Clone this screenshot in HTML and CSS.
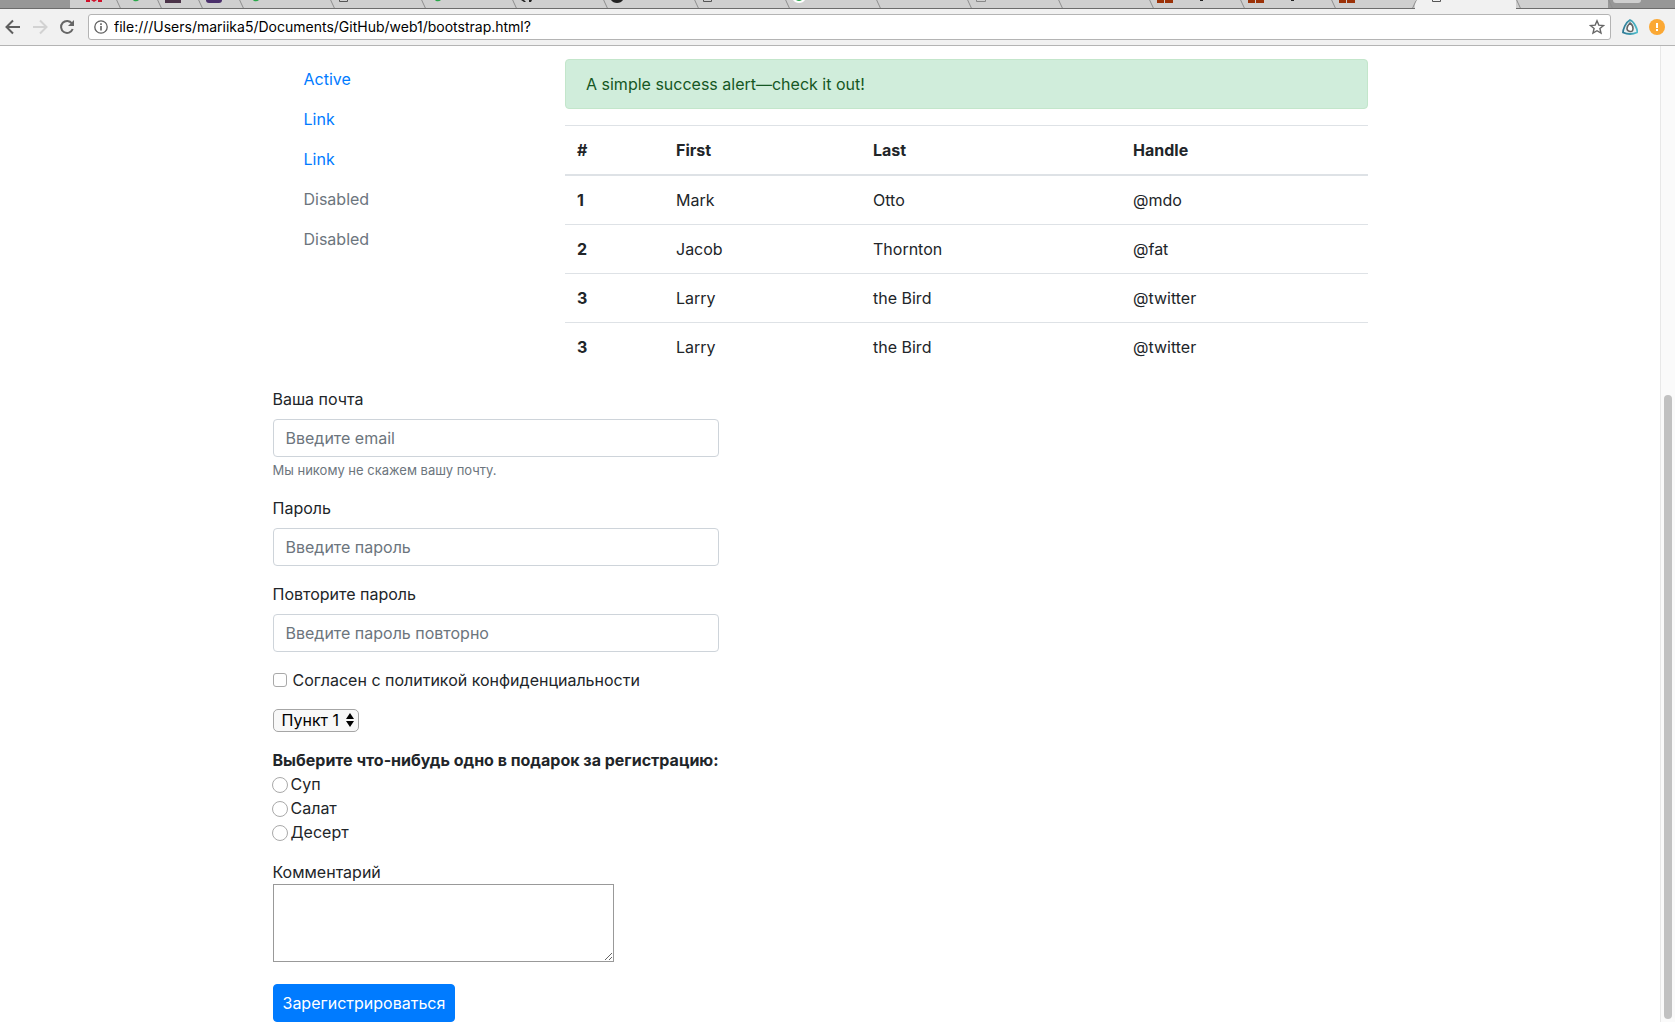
FILE: index.html
```html
<!DOCTYPE html>
<html lang="ru">
<head>
<meta charset="utf-8">
<meta name="viewport" content="width=device-width, initial-scale=1">
<title>Bootstrap</title>
<link rel="stylesheet" href="styles.css">
</head>
<body>
<header class="browser">
  <div class="tabs">
    <div class="tab tab-first"><svg width="16" height="3"><path d="M0 0h4v2H0zM12 0h4v2h-4zM5 0h6L8 2z" fill="#d0112b"/></svg></div>
    <div class="tab tab-pinned"><svg width="16" height="3"><path d="M9 0h6q-2 2-5 1z" fill="#2aa84a"/></svg></div>
    <div class="tab tab-pinned"><svg width="16" height="3"><path d="M0 0h16v3H0z" fill="#4b3348"/></svg></div>
    <div class="tab tab-pinned"><svg width="16" height="3"><path d="M0 0h16q0 3-3 3H3Q0 3 0 0z" fill="#4a2f6b"/></svg></div>
    <div class="tab"><svg width="16" height="3"><path d="M6 0h6q-2 2-5 1z" fill="#2aa84a"/></svg></div>
    <div class="tab"><svg width="16" height="3"><path d="M1.500 0v1.500h8V0" fill="none" stroke="#555"/></svg></div>
    <div class="tab"><svg width="16" height="3"><path d="M6 0h6q-2 2-5 1z" fill="#2aa84a"/></svg></div>
    <div class="tab"><svg width="16" height="3"><path d="M1 0h3l2 2H4zM9 0h3l-1 2H9z" fill="#222"/></svg></div>
    <div class="tab"><svg width="16" height="3"><path d="M0 0h12q-2 3-6 3T0 0z" fill="#222"/></svg></div>
    <div class="tab"><svg width="16" height="3"><path d="M1.500 0v1.500h8V0" fill="none" stroke="#555"/></svg></div>
    <div class="tab"><svg width="16" height="3"><path d="M0 0h12q-2 3-6 3T0 0z" fill="#fff"/><path d="M3 0h6Q6 2 3 0z" fill="#2aa84a"/></svg></div>
    <div class="tab"></div>
    <div class="tab"><svg width="16" height="3"><path d="M1.500 0v1.500h9V0" fill="none" stroke="#888"/></svg></div>
    <div class="tab"></div>
    <div class="tab"><svg width="60" height="3"><path d="M0 0h7v3H0zM8 0h8v3H8z" fill="#9c3208"/><path d="M43 0h3v1h-3z" fill="#222"/></svg></div>
    <div class="tab"><svg width="60" height="3"><path d="M0 0h7v3H0zM8 0h8v3H8z" fill="#9c3208"/><path d="M43 0h3v1h-3z" fill="#222"/></svg></div>
    <div class="tab tab-narrow"><svg width="16" height="3"><path d="M0 0h7v3H0zM8 0h8v3H8z" fill="#9c3208"/></svg></div>
    <div class="tab tab-active"><svg width="16" height="3"><path d="M1.500 0v1.500h8V0" fill="none" stroke="#555"/></svg></div>
    <div class="tab tab-last"></div>
    <div class="tabs-rest"><div class="new-tab"></div></div>
  </div>
  <div class="toolbar">
    <button class="tool" type="button" aria-label="Назад"><svg width="16" height="16" fill="none" stroke="#5f5f5f" stroke-width="2"><path d="M15 8H2M8 1.500 1.500 8 8 14.500"/></svg></button>
    <button class="tool" type="button" aria-label="Вперёд"><svg width="16" height="16" fill="none" stroke="#d2d2d2" stroke-width="2"><path d="M1 8h13M8 1.500 14.500 8 8 14.500"/></svg></button>
    <button class="tool" type="button" aria-label="Обновить"><svg width="16" height="16"><path d="M13 4.500A6 6 0 1 0 13.700 10" fill="none" stroke="#666" stroke-width="2"/><path d="M15 1v6H9z" fill="#666"/></svg></button>
    <div class="address">
      <svg width="14" height="14" fill="none" stroke="#5f5f5f"><circle cx="7" cy="7" r="6.200" stroke-width="1.300"/><path d="M7 6v4.500M7 3.300v1.700" stroke-width="1.600"/></svg>
      <input class="url" type="text" aria-label="Адрес" value="file:///Users/mariika5/Documents/GitHub/web1/bootstrap.html?">
      <svg width="16" height="16"><path d="m8 1.800 1.800 4.300 4.700.4-3.600 3 1.100 4.600L8 11.700l-4 2.400 1.100-4.600-3.600-3 4.700-.4z" fill="none" stroke="#666" stroke-width="1.400"/></svg>
    </div>
    <svg width="16" height="16"><defs><linearGradient id="shell" x1="0" x2="1"><stop offset="0" stop-color="#2e7893"/><stop offset="1" stop-color="#4dbccb"/></linearGradient></defs><path d="M8 1Q11 2 13.500 7T15 13.500Q8 16.500 1 13.500 1 11 2.800 7T8 1z" fill="#e8f1f3" stroke="url(#shell)" stroke-width="1.800"/><path d="M8 4Q11 6 11 9.500T8 12.500 5 9.500 8 4z" fill="#fff" stroke="#666" stroke-width="1.600"/></svg>
    <svg width="16" height="16"><circle cx="8" cy="8" r="8" fill="#fba834"/><path d="M7 4h2v5H7zM7 10h2v2H7z" fill="#fff"/></svg>
  </div>
</header>
<div class="viewport">
  <main class="page">
    <div class="container">
      <div class="row">
        <nav class="side">
          <a class="side-link" href="#">Active</a>
          <a class="side-link" href="#">Link</a>
          <a class="side-link" href="#">Link</a>
          <a class="side-link disabled" href="#">Disabled</a>
          <a class="side-link disabled" href="#">Disabled</a>
        </nav>
        <section class="content">
          <div class="alert" role="alert">A simple success alert—check it out!</div>
          <table class="table">
            <colgroup><col class="col-num"><col class="col-first"><col class="col-last"><col></colgroup>
            <thead>
              <tr><th scope="col">#</th><th scope="col">First</th><th scope="col">Last</th><th scope="col">Handle</th></tr>
            </thead>
            <tbody>
              <tr><th scope="row">1</th><td>Mark</td><td>Otto</td><td>@mdo</td></tr>
              <tr><th scope="row">2</th><td>Jacob</td><td>Thornton</td><td>@fat</td></tr>
              <tr><th scope="row">3</th><td>Larry</td><td>the Bird</td><td>@twitter</td></tr>
              <tr><th scope="row">3</th><td>Larry</td><td>the Bird</td><td>@twitter</td></tr>
            </tbody>
          </table>
        </section>
      </div>
      <form class="form">
        <div class="group">
          <label class="label" for="email">Ваша почта</label>
          <input class="control" id="email" type="email" placeholder="Введите email">
          <small class="hint">Мы никому не скажем вашу почту.</small>
        </div>
        <div class="group">
          <label class="label" for="pass">Пароль</label>
          <input class="control" id="pass" type="password" placeholder="Введите пароль">
        </div>
        <div class="group">
          <label class="label" for="pass2">Повторите пароль</label>
          <input class="control" id="pass2" type="password" placeholder="Введите пароль повторно">
        </div>
        <div class="group">
          <label class="check"><input class="box" type="checkbox">Согласен с политикой конфиденциальности</label>
        </div>
        <div class="group select-wrap">
          <select class="select" aria-label="Пункт"><option>Пункт 1</option><option>Пункт 2</option></select>
          <svg class="arrows" width="8" height="14"><path d="M4 0l4 6H0zM4 14l4-6H0z"/></svg>
        </div>
        <fieldset class="group gifts">
          <legend class="legend">Выберите что-нибудь одно в подарок за регистрацию:</legend>
          <label class="option"><input class="dot" type="radio" name="gift">Суп</label>
          <label class="option"><input class="dot" type="radio" name="gift">Салат</label>
          <label class="option"><input class="dot" type="radio" name="gift">Десерт</label>
        </fieldset>
        <div class="comment">
          <label for="comment">Комментарий</label>
          <textarea class="area" id="comment"></textarea>
        </div>
        <button class="submit" type="submit">Зарегистрироваться</button>
      </form>
    </div>
  </main>
  <div class="scrollbar"><div class="thumb"></div></div>
</div>
</body>
</html>
```
FILE: styles.css
```css
* { box-sizing: border-box; }

body {
  margin: 0;
  min-height: 100vh;
  display: flex;
  flex-direction: column;
  background: #fff;
  color: #212529;
  font: 400 16px/24px Inter, "Liberation Sans", sans-serif;
}

input, select, textarea, button { font: inherit; margin: 0; }
svg { display: block; flex: none; }

/* Browser window */
.browser { background: #f1f1f1; border-bottom: 1px solid #b4b4b4; }

.tabs {
  display: flex;
  height: 9px;
  overflow: hidden;
  background: #979797;
}
.tabs::before { content: ""; flex: 0 0 70px; border-bottom: 1px solid #6c6c6c; }
.tab {
  flex: 0 0 91px;
  position: relative;
  padding-left: 8px;
  background: #cfcfcf;
  border-bottom: 1px solid #6c6c6c;
}
.tab::after {
  content: "";
  position: absolute;
  z-index: 1;
  top: 0;
  right: -3px;
  width: 1px;
  height: 8px;
  background: #8e8e8e;
  transform: skewX(25deg);
}
.tab-first { flex-basis: 46px; padding-left: 16px; }
.tab-pinned { flex-basis: 41px; }
.tab-narrow { flex-basis: 84px; }
.tab-narrow::after { right: 0; transform: skewX(-25deg); }
.tab-active { flex-basis: 101px; padding-left: 16px; background: #f1f1f1; border-bottom: 0; }
.tab-last { flex-basis: 92px; }
.tabs-rest { flex: 1; border-bottom: 1px solid #6c6c6c; }
.new-tab { width: 28px; height: 3px; margin-left: 5px; border-radius: 0 0 3px 3px; background: #cfcfcf; }

.toolbar {
  display: flex;
  align-items: center;
  gap: 11px;
  padding: 5px 10px 5px 5px;
}
.tool { padding: 0; border: 0; background: none; }
.address {
  flex: 1;
  display: flex;
  align-items: center;
  gap: 6px;
  height: 26px;
  margin-left: 2px;
  padding: 0 5px;
  border: 1px solid #b4b4b4;
  border-radius: 3px;
  background: #fff;
}
.url {
  flex: 1;
  min-width: 0;
  padding: 0;
  border: 0;
  outline: 0;
  background: none;
  color: #000;
  font-size: 14px;
  line-height: 20px;
}

/* Page */
.viewport { flex: 1; display: flex; }
.page { flex: 1; min-width: 0; padding: 13px 5px 0 0; }
.container { max-width: 1140px; margin: 0 auto; padding: 0 15px; }
.row { display: flex; }
.side { flex: 0 0 25%; padding: 0 15px; }
.side-link { display: block; padding: 8px 16px; color: #007bff; text-decoration: none; }
.disabled { color: #6c757d; }
.content { flex: 1; padding: 0 15px; }

.alert {
  margin-bottom: 16px;
  padding: 12px 20px;
  border: 1px solid #c3e6cb;
  border-radius: 4px;
  background: #d0eddb;
  color: #155724;
}

.table { width: 100%; margin-bottom: 16px; table-layout: fixed; border-collapse: collapse; text-align: left; }
.table th, .table td { padding: 12px; border-top: 1px solid #dee2e6; }
.table th { font-weight: 700; }
.table thead th { border-bottom: 2px solid #dee2e6; }
.col-num { width: 99px; }
.col-first { width: 197px; }
.col-last { width: 260px; }

/* Registration form */
.form { width: 446px; }
.group { margin-bottom: 16px; }
.label { display: block; margin-bottom: 8px; }
.control {
  display: block;
  width: 100%;
  height: 38px;
  padding: 6px 12px;
  border: 1px solid #ced4da;
  border-radius: 4px;
  background: #fff;
}
.control::placeholder { color: #6c757d; opacity: 1; }
.hint { display: block; margin-top: 4px; color: #6c757d; font-size: 13px; line-height: 19px; }

.check, .option { display: flex; align-items: center; }
.check { gap: 6px; white-space: nowrap; }
.option { gap: 3px; }
.box, .dot { appearance: none; flex: none; border: 1px solid #a9a9a9; background: #fff; }
.box { width: 14px; height: 14px; border-radius: 3px; }
.dot { width: 16px; height: 16px; margin: 2px 0 0 -1px; border-radius: 50%; }

.select-wrap { display: flex; align-items: center; height: 24px; }
.select {
  appearance: none;
  width: 86px;
  height: 23px;
  padding: 0 8px;
  border: 1px solid #a6a6a6;
  border-radius: 5px;
  background: #f8f8f8;
  color: #000;
  line-height: 20px;
}
.arrows { margin-left: -13px; pointer-events: none; }

.gifts { min-width: 0; margin-inline: 0; padding: 0; border: 0; }
.legend { padding: 0; font-weight: 700; white-space: nowrap; }

.comment { margin-bottom: 22px; }
.area { display: block; width: 341px; height: 78px; border: 1px solid #999; border-radius: 0; background: #fff; }
.submit {
  height: 38px;
  padding: 6px 9px;
  border: 1px solid #007bff;
  border-radius: 4px;
  background: #007bff;
  color: #fff;
}

/* Scrollbar */
.scrollbar {
  flex: 0 0 15px;
  display: flex;
  flex-direction: column;
  align-items: center;
  padding-bottom: 3px;
  border-left: 1px solid #e8e8e8;
  background: #fafafa;
}
.scrollbar::before { content: ""; flex: 349; }
.thumb { flex: 624; width: 8px; border-radius: 4px; background: #c1c1c1; }
```
